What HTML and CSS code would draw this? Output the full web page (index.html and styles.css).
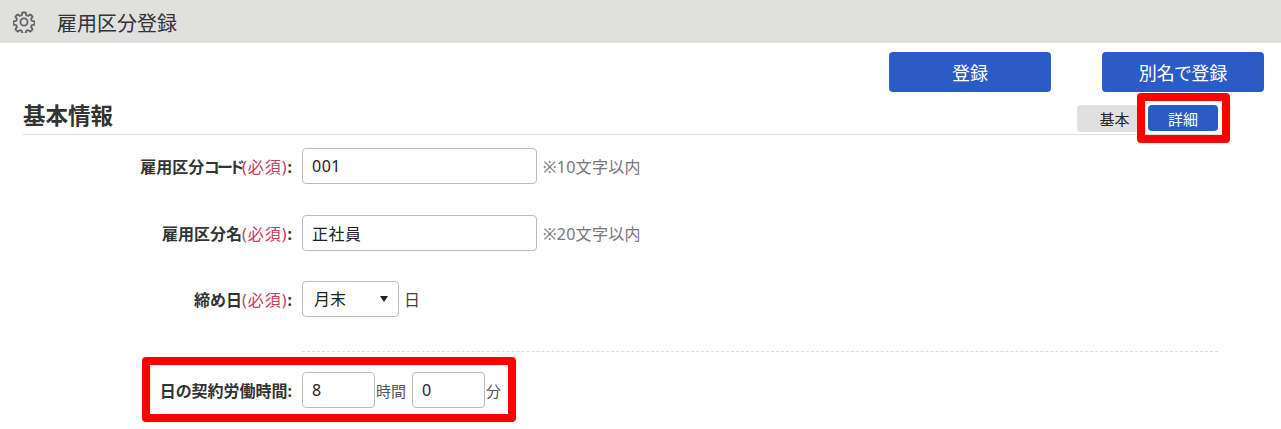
FILE: index.html
```html
<!DOCTYPE html>
<html lang="ja">
<head>
    <meta charset="UTF-8">
    <meta name="viewport" content="width=device-width, initial-scale=1.0">
    <title>雇用区分登録</title>
    <link rel="stylesheet" href="styles.css">
</head>
<body>
    <div class="page-header">
        <svg class="gear" width="22" height="22" viewBox="0 0 24 24" fill="none" stroke="#666" stroke-width="2" stroke-linejoin="round">
            <circle cx="12" cy="12" r="3.9"/>
            <path d="M10.2 1.6h3.6l.6 3 1.9.8 2.6-1.7 2.5 2.5-1.7 2.6.8 1.9 3 .6v3.6l-3 .6-.8 1.9 1.7 2.6-2.5 2.5-2.6-1.7-1.9.8-.6 3h-3.6l-.6-3-1.9-.8-2.6 1.7-2.5-2.5 1.7-2.6-.8-1.9-3-.6v-3.6l3-.6.8-1.9-1.7-2.6 2.5-2.5 2.6 1.7 1.9-.8z"/>
        </svg>
        <span class="page-title">雇用区分登録</span>
    </div>

    <div class="toolbar">
        <button class="btn-main">登録</button>
        <button class="btn-main">別名で登録</button>
    </div>

    <div class="section-head">
        <h2>基本情報</h2>
        <div class="tabs">
            <button class="tab">基本</button>
            <button class="tab active">詳細</button>
        </div>
    </div>

    <div class="form">
        <div class="row">
            <label class="label">雇用区分<span class="kana">コード</span><span class="req">(必須)</span>:</label>
            <input class="text-input" type="text" value="001">
            <span class="note">※10文字以内</span>
        </div>
        <div class="row">
            <label class="label">雇用区分名<span class="req">(必須)</span>:</label>
            <input class="text-input" type="text" value="正社員">
            <span class="note">※20文字以内</span>
        </div>
        <div class="row">
            <label class="label">締め日<span class="req">(必須)</span>:</label>
            <div class="select-wrap">
                <select class="select">
                    <option>月末</option>
                </select>
            </div>
            <span class="unit">日</span>
        </div>
        <div class="divider"></div>
        <div class="row row-time">
            <label class="label">日の契約労働時間:</label>
            <input class="num-input" type="text" value="8">
            <span class="unit-small">時間</span>
            <input class="num-input" type="text" value="0">
            <span class="unit-small">分</span>
        </div>
    </div>

    <div class="mark mark-tab"></div>
    <div class="mark mark-time"></div>
</body>
</html>
```

FILE: styles.css
```css
html, body { margin: 0; padding: 0; }
body { position: relative; height: 429px; overflow: hidden; background: #fff; color: #222; font-family: "Noto Sans", "Noto Sans CJK JP", sans-serif; font-size: 16px; }

.page-header { height: 43px; background: #e0e0df; display: flex; align-items: center; padding-left: 13px; }
.gear { flex: none; }
.page-title { margin: 2px 0 0 22px; font-size: 20px; color: #333; }

.toolbar { display: flex; justify-content: flex-end; gap: 51px; padding: 9px 17px 0 0; }
.btn-main { width: 162px; height: 40px; background: #2b5cc5; color: #fff; border: none; border-radius: 4px; font-family: inherit; font-size: 18px; font-feature-settings: "palt"; padding: 0; }

.section-head { display: flex; justify-content: space-between; align-items: flex-end; margin: 0 63px 0 23px; height: 42px; border-bottom: 1px solid #ddd; }
.section-head h2 { margin: 0 0 2px; font-size: 22.5px; line-height: 32px; font-weight: bold; color: #333; }
.tabs { display: flex; margin-bottom: 2px; }
.tab { height: 27px; border: none; border-radius: 4px; background: #e0e0e0; color: #222; font-family: inherit; font-size: 15px; padding: 0; width: 75px; }
.tab.active { position: relative; width: 70px; height: 26px; margin-left: -4px; background: #2b5cc5; color: #fff; box-shadow: 0 0 0 3px #fff; }

.form { padding-top: 13px; }
.row { display: flex; align-items: center; height: 36px; margin-bottom: 30.5px; }
.label { width: 292px; margin-right: 10px; text-align: right; font-weight: bold; font-size: 16px; font-feature-settings: "palt"; color: #333; flex: none; }
.req { color: #c8405a; font-weight: normal; font-feature-settings: normal; letter-spacing: 1px; }
.kana { letter-spacing: -2.5px; }
.text-input, .num-input, .select { box-sizing: border-box; height: 36px; border: 1px solid #bbb; border-radius: 4px; background: #fff; font-family: inherit; font-size: 16px; color: #222; padding: 0 9px; }
.text-input { width: 235px; letter-spacing: .5px; }
.num-input { width: 73px; }
.note { margin-left: 6px; font-size: 16px; letter-spacing: .3px; color: #777; }
.unit { margin-left: 5px; color: #444; }
.unit-small { color: #555; margin: 0 6px 0 1px; font-size: 15px; }
.select-wrap { position: relative; width: 97px; }
.select { width: 100%; appearance: none; padding-left: 11px; }
.select-wrap::after { content: ""; position: absolute; right: 11px; top: 15px; border-left: 4.5px solid transparent; border-right: 4.5px solid transparent; border-top: 6px solid #222; }
.divider { margin: 34px 63px 20px 302px; border-top: 1px dashed #ddd; }
.row-time { margin-bottom: 0; }

.mark { position: absolute; box-sizing: border-box; border: 8px solid #f00; border-radius: 4px; }
.mark-tab { left: 1137px; top: 93px; width: 93px; height: 50px; }
.mark-time { left: 142px; top: 357px; width: 374px; height: 65px; }
```
